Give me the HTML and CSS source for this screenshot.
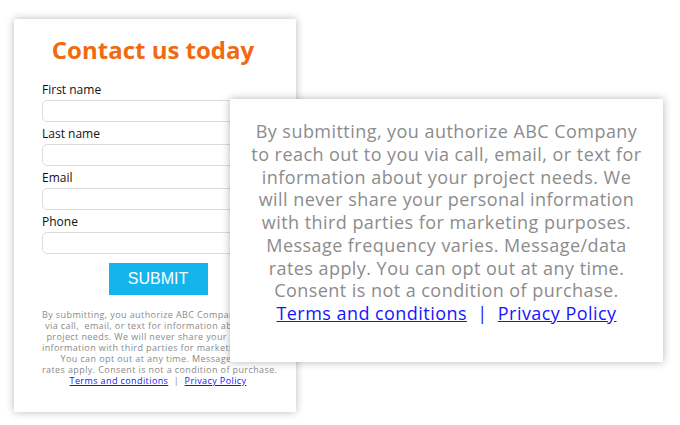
FILE: index.html
```html
<!DOCTYPE html>
<html lang="en">
<head>
    <meta charset="UTF-8">
    <meta name="viewport" content="width=device-width, initial-scale=1.0">
    <title>Contact us today</title>
    <link rel="stylesheet" href="styles.css">
</head>
<body>
    <div class="form-card">
        <h1>Contact us today</h1>
        <form class="contact-form">
            <label for="first-name">First name</label>
            <input type="text" id="first-name">
            <label for="last-name">Last name</label>
            <input type="text" id="last-name">
            <label for="email">Email</label>
            <input type="email" id="email">
            <label for="phone">Phone</label>
            <input type="tel" id="phone">
            <div class="submit-row">
                <button type="submit">SUBMIT</button>
            </div>
        </form>
        <p class="consent">
            By submitting, you authorize ABC Company to reach out to you<br>
            via call,&nbsp; email, or text for information about your<br>
            project needs. We will never share your personal<br>
            information with third parties for marketing purposes.<br>
            You can opt out at any time. Message/data<br>
            rates apply. Consent is not a condition of purchase.<br>
            <a href="#">Terms and conditions</a> &nbsp;|&nbsp; <a href="#">Privacy Policy</a>
        </p>
    </div>

    <!-- enlarged consent text -->
    <div class="zoom-card">
        <p>
            By submitting, you authorize ABC Company<br>
            to reach out to you via call, email, or text for<br>
            information about your project needs. We<br>
            will never share your personal information<br>
            with third parties for marketing purposes.<br>
            Message frequency varies. Message/data<br>
            rates apply. You can opt out at any time.<br>
            Consent is not a condition of purchase.<br>
            <a href="#">Terms and conditions</a> &nbsp;<span class="sep">|</span>&nbsp; <a href="#">Privacy Policy</a>
        </p>
    </div>
</body>
</html>
```

FILE: styles.css
```css
body {
    margin: 0;
    font-family: "Open Sans", "DejaVu Sans", sans-serif;
    background-color: #fff;
    position: relative;
    height: 425px;
    overflow: hidden;
}
.form-card {
    margin: 19px 0 0 14px;
    width: 282px;
    height: 393px;
    box-sizing: border-box;
    padding: 16px 22px 0 28px;
    background: #fff;
    box-shadow: 0 0 8px rgba(0, 0, 0, 0.28);
}
.form-card h1 {
    margin: 0;
    padding-right: 10px;
    font-size: 24px;
    line-height: 30px;
    font-weight: 700;
    color: #f26a10;
    text-align: center;
}
.contact-form {
    display: flex;
    flex-direction: column;
    margin-top: 17px;
}
.contact-form label {
    font-size: 12px;
    line-height: 16px;
    color: #111;
}
.contact-form input {
    height: 22px;
    margin: 2px 0 4px;
    box-sizing: border-box;
    border: 1px solid #dcdcdc;
    border-radius: 5px;
    background: #fff;
}
.submit-row {
    display: flex;
    justify-content: center;
    margin-top: 5px;
}
.submit-row button {
    width: 99px;
    height: 32px;
    border: none;
    background-color: #13b5ec;
    color: #fff;
    font-family: "Liberation Sans", Arial, sans-serif;
    font-size: 16px;
}
.consent {
    margin: 14px 0 0;
    font-size: 9px;
    line-height: 11px;
    letter-spacing: 0.4px;
    white-space: nowrap;
    color: #8a8a8a;
    text-align: center;
}
.consent a,
.zoom-card a,
.sep {
    color: #1515ff;
}
.zoom-card {
    position: absolute;
    left: 230px;
    top: 99px;
    width: 433px;
    height: 263px;
    box-sizing: border-box;
    padding-top: 21px;
    background: #fff;
    box-shadow: 0 0 8px rgba(0, 0, 0, 0.3);
}
.zoom-card p {
    margin: 0;
    font-size: 18px;
    line-height: 22.75px;
    letter-spacing: 0.45px;
    color: #8c8c8c;
    text-align: center;
}
```
